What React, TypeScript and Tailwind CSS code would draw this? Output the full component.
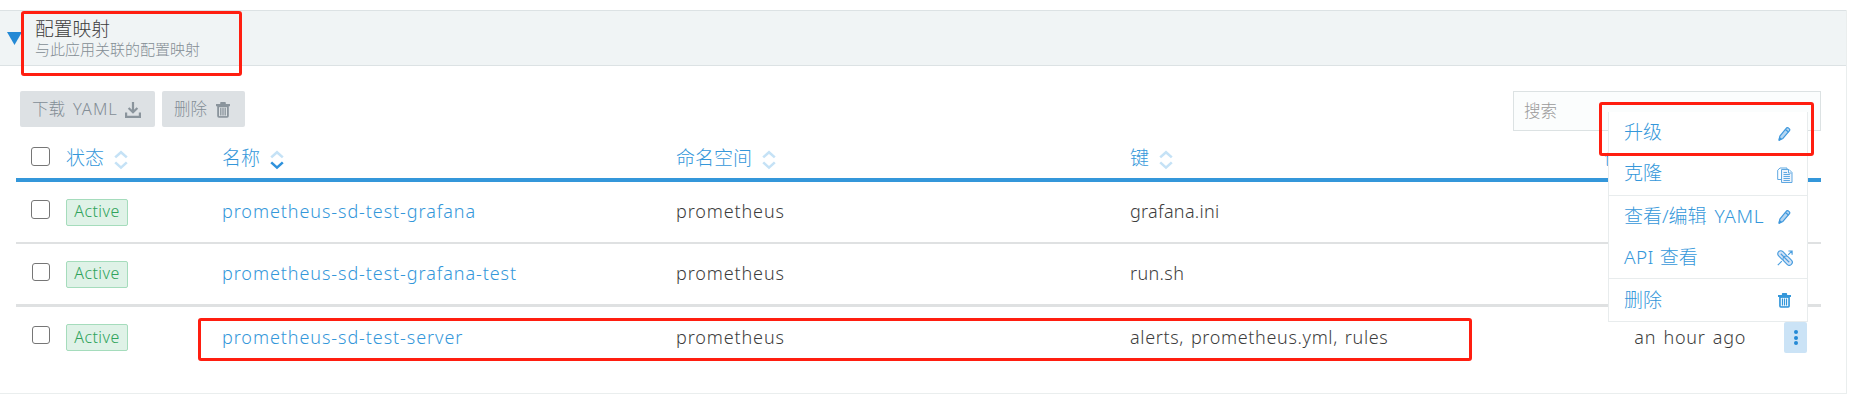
import React from "react";

const cell = "flex items-center whitespace-pre";

function Sort({ down = false }: { down?: boolean }) {
  return (
    <svg width="14" height="20" viewBox="0 0 14 20" fill="none" strokeWidth="2.6" className="ml-[10px] mt-[3px] shrink-0">
      <path d="M1.2 7.4 7 2.2l5.8 5.2" stroke="#c5e2f6" />
      <path d="M1.2 12.4 7 17.6l5.8-5.2" stroke={down ? "#2f92dc" : "#c5e2f6"} />
    </svg>
  );
}

function Box({ tall = false }: { tall?: boolean }) {
  return (
    <span className={tall ? "ml-[15px] mb-[4px] block size-[19px] rounded-[3px] border-[1.5px] border-[#767676] bg-white" : "ml-4 mb-[4px] block size-[18px] rounded-[3px] border-[1.5px] border-[#767676] bg-white"} />
  );
}

function Pencil() {
  return (
    <svg width="13" height="16" viewBox="0 0 14 16" fill="#b5d6f2" stroke="#3f98dc" strokeWidth="1.3" strokeLinejoin="round">
      <path d="M1.2 14.6 2 10.4 8.6 2.3Q9.6 .8 11 1.4l1 .8q1.3 1 .2 2.5L5.3 12.8Z" />
      <path d="m8 3.2 3.3 2.600" />
      <path d="M1.2 14.6 1.7 12l1.6 1.4Z" fill="#3a95da" />
    </svg>
  );
}

function Copy() {
  return (
    <svg width="16" height="16" viewBox="0 0 16 16" fill="#fff" stroke="#5fa8e2" strokeWidth="1">
      <path d="M4 12.5H.7V3.2L3 1h7v2" />
      <path d="M4.5 2.5h7.500l3 3v10H4.5Z" fill="#eef3fb" />
      <path d="M11.5 2.500v3.500h3M6.5 5.500h3.5M6.5 7.500h6.4M6.5 9.500h6.4M6.5 11.500h6.4M6.500 13.500h6.400" />
    </svg>
  );
}

function ApiLink() {
  return (
    <svg width="16" height="16" viewBox="0 0 16 16" fill="none" stroke="#4a9edf" strokeWidth="1.2">
      <g transform="rotate(45 8 8)">
        <rect x="-1" y="5" width="10.500" height="6" rx="3" fill="#d5e3f6" />
        <rect x="6.500" y="5" width="10.500" height="6" rx="3" fill="#d5e3f6" />
        <path d="M2 8h12" />
      </g>
      <path d="M11.200 4.800 14.800 1.200M11.400 1h3.700v3.700M4.800 11.200.8 15.200" />
    </svg>
  );
}

function Trash({ size, color, inner }: { size: number; color: string; inner: string }) {
  return (
    <svg width={size} height={size + 2} viewBox="0 0 14 16" fill={color}>
      <path d="M4.2 2V.8Q4.200 0 5 0h4q.8 0 .8 .8V2H14v2.200H0V2Z" />
      <path d="M1.2 4h11.600V14q0 1.800-1.800 1.800H3Q1.200 15.800 1.200 14Z" />
      <path d="M3 5.200h8v8.900H3Z" fill={inner} />
      <path d="M4.800 5.800v7.600M7 5.800v7.600M9.200 5.800v7.600" stroke={color} strokeWidth="1.300" />
    </svg>
  );
}

function Download() {
  return (
    <svg width="16" height="16" viewBox="0 0 16 16" fill="none" stroke="#8a949c" strokeWidth="2.200">
      <path d="M8 0v9.500M3.600 6 8 10.200 12.400 6M1.100 10.500V14.900h13.800v-4.400" />
    </svg>
  );
}

const rows = [
  { name: "prometheus-sd-test-grafana", ns: "prometheus", keys: "grafana.ini", keyT: "tracking-[0.3px]" },
  { name: "prometheus-sd-test-grafana-test", ns: "prometheus", keys: "run.sh", keyT: "tracking-[0.35px]" },
  { name: "prometheus-sd-test-server", ns: "prometheus", keys: "alerts, prometheus.yml, rules", keyT: "tracking-[0.65px] [word-spacing:1.5px]" },
];

const grid = "grid grid-cols-[50px_157px_453px_454px_1fr]";

export default function App() {
  return (
    <div className="relative h-[416px] w-[1855px] overflow-hidden bg-white pt-[10px] font-['Noto_Sans','Noto_Sans_CJK_SC',sans-serif] text-[18px] font-light text-[#3d3d3d]">
      <div className="flex h-[384px] w-[1847px] flex-col border-r border-b border-[#eaeeee]">
        <header className="flex h-14 shrink-0 items-center border-y border-[#dce2e4] bg-[#f0f4f5] pl-[7px]">
          <svg width="15" height="13" viewBox="0 0 15 13" className="mr-[13px]"><path d="M0 0h15L7.500 13Z" fill="#2489d5" /></svg>
          <div className="flex flex-col">
            <span className="text-[18.75px] leading-[22px]">配置映射</span>
            <span className="text-[15px] leading-[19px] text-[#848d94]">与此应用关联的配置映射</span>
          </div>
        </header>

        <div className="flex h-[66px] shrink-0 items-start justify-between pt-[25px] pr-[25px] pl-5">
          <div className="flex gap-[7px] text-[16.5px] text-[#848e96]">
            <div className="flex h-9 w-[135px] items-center rounded-[2px] bg-[#dde1e4] pl-[12px]">
              <span className="pt-px">下载</span><span className="ml-[8px] w-[46px] pt-px tracking-[1px]">YAML</span><span className="ml-[6px] pt-0.5"><Download /></span>
            </div>
            <div className="flex h-9 w-[83px] items-center rounded-[2px] bg-[#dde1e4] pl-[12px]">
              <span className="pt-px">删除</span><span className="ml-[9px] pt-0.5"><Trash size={14} color="#8a949c" inner="#dde1e4" /></span>
            </div>
          </div>
          <div className="flex h-10 w-[308px] items-center border border-[#dce2e3] bg-[#fbfdfd] pl-[10px] text-[16.5px] text-[#9a9a9a]">搜索</div>
        </div>

        <main className="flex w-[1821px] flex-col pl-4">
          <div className={grid + " h-[50px] border-b-4 border-[#3497da] pt-[6px] text-[19px] text-[#3497da]"}>
            <div className={cell}><Box tall /></div>
            <div className={cell}>状态<Sort /></div>
            <div className={cell + " -ml-px"}>名称<Sort down /></div>
            <div className={cell}>命名空间<Sort /></div>
            <div className={cell + " justify-between"}><span className="flex items-center">键<Sort /></span><span className="mr-[141px]">创建时间</span></div>
          </div>
          {rows.map((r, i) => (
            <div key={r.name} className={grid + (i === 0 ? " h-[62px] border-b-2 border-[#dfe1e2]" : i === 1 ? " h-[63px] border-b-3 border-[#dfe1e2]" : " h-[61px]")}>
              <div className={cell + " pb-px"}><Box tall={i === 0} /></div>
              <div className={cell}><span className="flex h-[27px] w-[62px] items-center justify-center rounded-[2px] border border-[#a5dcbc] bg-[#dff2e7] pb-0.5 text-[16px] tracking-[0.45px] text-[#2fa35b]">Active</span></div>
              <div className={cell + " -ml-px pb-px tracking-[0.92px] text-[#3497da]"}>{r.name}</div>
              <div className={cell + " pb-px tracking-[0.87px]"}>{r.ns}</div>
              <div className={cell + " justify-between " + r.keyT}>
                <span className="pb-px">{r.keys}</span>
                {i === 2 && (
                  <span className="flex items-center">
                    <span className="mr-[38px] pb-px tracking-[0.7px] [word-spacing:2px]">an hour ago</span>
                    <span className="mr-[14px] flex h-[31px] w-[23px] flex-col items-center justify-center gap-[1.500px] rounded-[2px] bg-[#cbe3f6]">
                      <i className="size-1 rounded-full bg-[#2489d5]" /><i className="size-1 rounded-full bg-[#2489d5]" /><i className="size-1 rounded-full bg-[#2489d5]" />
                    </span>
                  </span>
                )}
              </div>
            </div>
          ))}
        </main>
      </div>

      <div className="absolute top-[112px] left-[1608px] flex h-[210px] w-[200px] flex-col border border-t-0 border-[#e8eced] bg-white pl-[15px] text-[19px] text-[#3497da]">
        <div className="flex h-[40px] items-center justify-between pr-[16px]"><span>升级</span><span className="pt-1"><Pencil /></span></div>
        <div className="flex h-[43px] items-center justify-between pr-[14px]"><span>克隆</span><span className="pt-0.5"><Copy /></span></div>
        <div className="-ml-[15px] h-px shrink-0 bg-[#e8eced]" />
        <div className="flex h-[42px] items-center justify-between pr-[16px]"><span className="flex pb-px">查看/编辑<span className="ml-[8px] tracking-[0.7px]">YAML</span></span><Pencil /></div>
        <div className="flex h-[40px] items-center justify-between pr-[14px]"><span className="flex pb-0.5"><span className="mr-[6px] tracking-[0.4px]">API</span>查看</span><ApiLink /></div>
        <div className="-ml-[15px] h-px shrink-0 bg-[#e8eced]" />
        <div className="flex h-[42px] items-center justify-between pr-[16px]"><span>删除</span><Trash size={13} color="#3497da" inner="#fff" /></div>
      </div>

      <div className="absolute top-[11px] left-[21px] h-[65px] w-[221px] rounded-[3px] border-3 border-[#ff1e10]" />
      <div className="absolute top-[102px] left-[1599px] h-[54px] w-[215px] rounded-[3px] border-3 border-[#ff1e10]" />
      <div className="absolute top-[318px] left-[198px] h-[43px] w-[1274px] rounded-[3px] border-3 border-[#ff1e10]" />
    </div>
  );
}
